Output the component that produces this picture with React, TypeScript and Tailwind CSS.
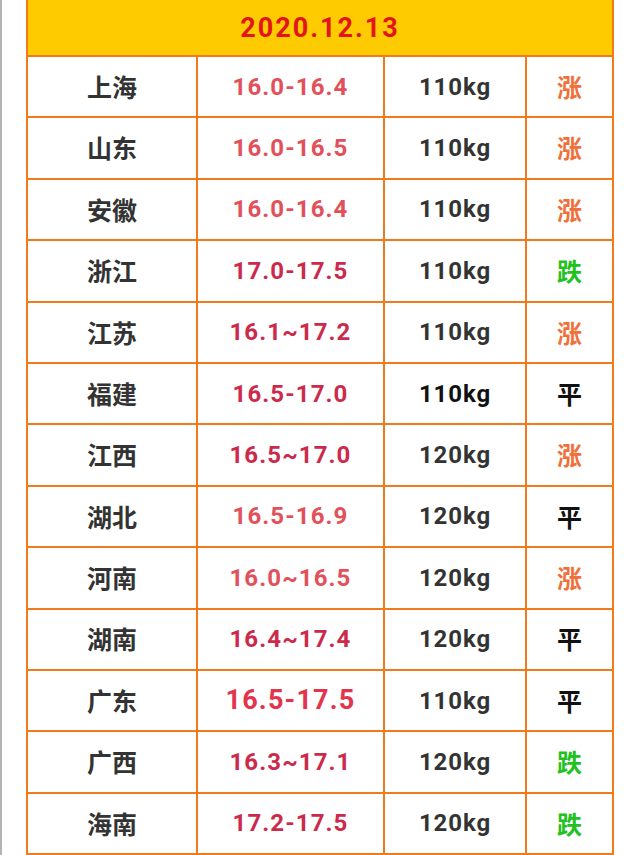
import React from "react";

type Row = {
  p: string;
  r: string;
  rc: string;
  big?: boolean;
  w: string;
  wc?: string;
  t: "涨" | "跌" | "平";
};

const LIGHT = "text-[#e2505a]";
const DARK = "text-[#cc2a4c]";

const rows: Row[] = [
  { p: "上海", r: "16.0-16.4", rc: LIGHT, w: "110kg", t: "涨" },
  { p: "山东", r: "16.0-16.5", rc: LIGHT, w: "110kg", t: "涨" },
  { p: "安徽", r: "16.0-16.4", rc: LIGHT, w: "110kg", t: "涨" },
  { p: "浙江", r: "17.0-17.5", rc: DARK, w: "110kg", t: "跌" },
  { p: "江苏", r: "16.1~17.2", rc: DARK, w: "110kg", t: "涨" },
  { p: "福建", r: "16.5-17.0", rc: DARK, w: "110kg", wc: "text-[#111111]", t: "平" },
  { p: "江西", r: "16.5~17.0", rc: DARK, w: "120kg", t: "涨" },
  { p: "湖北", r: "16.5-16.9", rc: LIGHT, w: "120kg", t: "平" },
  { p: "河南", r: "16.0~16.5", rc: LIGHT, w: "120kg", t: "涨" },
  { p: "湖南", r: "16.4~17.4", rc: DARK, w: "120kg", t: "平" },
  { p: "广东", r: "16.5-17.5", rc: "text-[#e3344e]", big: true, w: "110kg", t: "平" },
  { p: "广西", r: "16.3~17.1", rc: DARK, w: "120kg", t: "跌" },
  { p: "海南", r: "17.2-17.5", rc: DARK, w: "120kg", t: "跌" },
];

const trendColor: Record<string, string> = {
  涨: "text-[#f0703a]",
  跌: "text-[#1fc21f]",
  平: "text-[#111111]",
};

export default function App() {
  return (
    <div className="w-[640px] h-[855px] bg-white border-l-2 border-[#b4b4b4] overflow-hidden">
      <div className="ml-[24px] w-[588px] bg-[#f07a1c] px-[2px] pb-[2px] flex flex-col gap-[2px]">
        <div className="h-[55px] bg-[#fecb00] flex items-center justify-center text-[27px] font-bold text-[#e2141c] tracking-[2px] pt-[1px] font-[Roboto,sans-serif]">
          2020.12.13
        </div>
        {rows.map((row) => (
          <div
            key={row.p}
            className="grid grid-cols-[168px_185px_140px_85px] gap-[2px] h-[59.4px]"
          >
            <div className="bg-white flex items-center justify-center text-[25px] font-bold text-[#333333] font-['Noto_Sans_CJK_SC',sans-serif]">
              {row.p}
            </div>
            <div
              className={`bg-white flex items-center justify-center font-bold font-[Roboto,sans-serif] ${row.rc} ${
                row.big ? "text-[27px] tracking-[1.2px]" : "text-[24px] tracking-[1.1px]"
              }`}
            >
              {row.r}
            </div>
            <div
              className={`bg-white flex items-center justify-center text-[24px] font-bold tracking-[0.9px] font-[Roboto,sans-serif] ${
                row.wc ?? "text-[#333333]"
              }`}
            >
              {row.w}
            </div>
            <div
              className={`bg-white flex items-center justify-center text-[25px] font-bold font-['Noto_Sans_CJK_SC',sans-serif] ${trendColor[row.t]}`}
            >
              {row.t}
            </div>
          </div>
        ))}
      </div>
    </div>
  );
}
